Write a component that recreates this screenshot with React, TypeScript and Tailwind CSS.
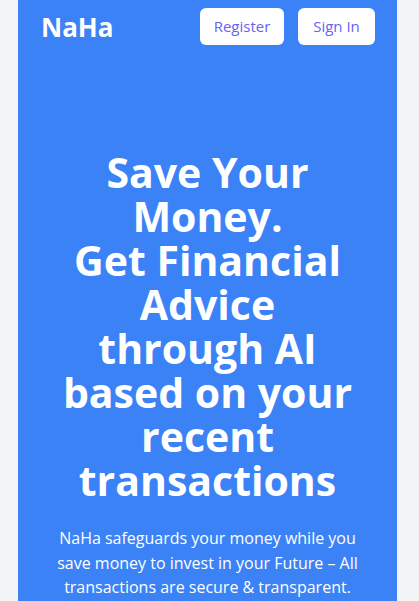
import React from "react";

export default function App() {
  const lines = [
    "Save Your",
    "Money.",
    "Get Financial",
    "Advice",
    "through AI",
    "based on your",
    "recent",
    "transactions",
  ];
  return (
    <div
      className="min-h-screen bg-[#f3f4f6] flex"
      style={{ fontFamily: '"Open Sans", "Noto Sans", sans-serif' }}
    >
      <div className="ml-[18px] w-[379px] min-h-screen bg-[#3b82f6] flex flex-col">
        <header className="flex items-center justify-between pl-[23px] pr-[22px] pt-2">
          <div className="text-[26px] font-bold text-white leading-none mt-[1px]">NaHa</div>
          <div className="flex gap-[14px]">
            <button className="h-[37px] w-[84px] rounded-md bg-white text-[15px] text-[#6366f1]">
              Register
            </button>
            <button className="h-[37px] w-[77px] rounded-md bg-white text-[15px] text-[#6366f1]">
              Sign In
            </button>
          </div>
        </header>
        <main className="flex flex-col items-center px-4 pt-[105px]">
          <h1 className="text-center text-[41px] font-bold leading-[44px] text-white">
            {lines.map((l) => (
              <span key={l} className="block whitespace-nowrap">
                {l}
              </span>
            ))}
          </h1>
          <p className="mt-6 text-center text-[16px] leading-[24.5px] text-white">
            <span className="block whitespace-nowrap">NaHa safeguards your money while you</span>
            <span className="block whitespace-nowrap">save money to invest in your Future – All</span>
            <span className="block whitespace-nowrap">transactions are secure &amp; transparent.</span>
          </p>
        </main>
      </div>
    </div>
  );
}
